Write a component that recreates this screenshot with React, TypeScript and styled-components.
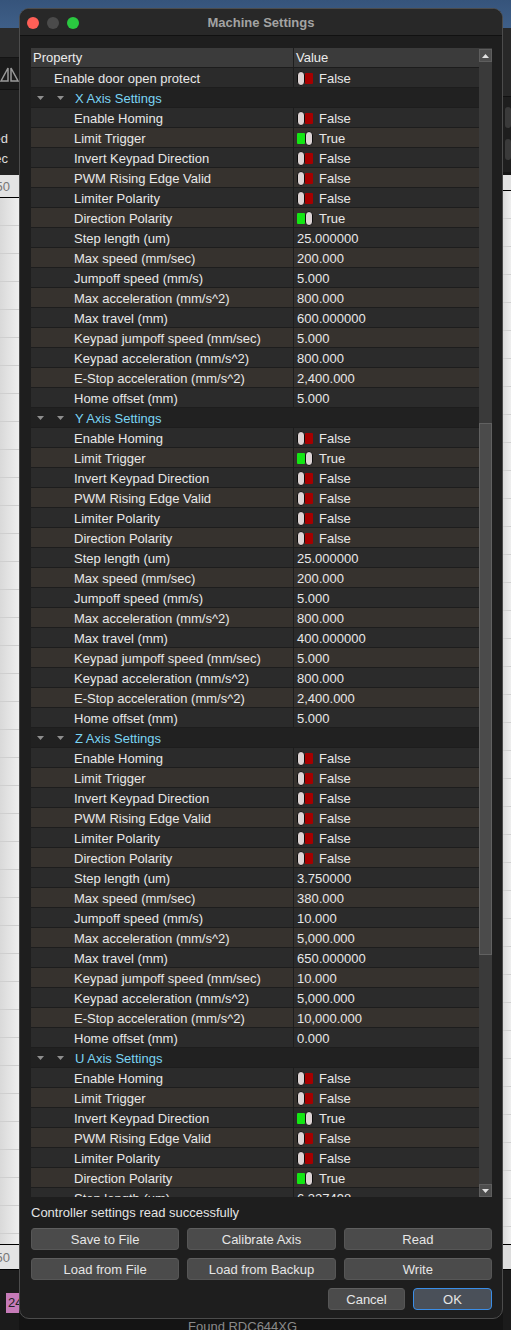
import React from "react";
import styled, { createGlobalStyle } from "styled-components";

const GlobalStyle = createGlobalStyle`
  html, body {
    margin: 0;
    padding: 0;
    background: #121212;
  }
  body {
    font-family: "Liberation Sans", Arial, Helvetica, sans-serif;
    font-size: 13px;
    -webkit-font-smoothing: antialiased;
  }
  * {
    box-sizing: border-box;
  }
`;

// 창 뒤에 보이는 데스크톱 / 앱 배경
const Desktop = styled.div`
  width: 511px;
  height: 1330px;
  overflow: hidden;
  display: flex;
  background: linear-gradient(to bottom, #36547b 0, #3f5f88 28px, #141414 28px);
`;

// 양옆으로 삐져나온 뒤쪽 앱
const Strip = styled.div<{ $w: number }>`
  flex: none;
  width: ${(p) => p.$w}px;
  display: flex;
  flex-direction: column;
  overflow: hidden;
`;

const Band = styled.div<{ $h: number; $bg: string; $line?: string; $color?: string }>`
  flex: none;
  height: ${(p) => p.$h}px;
  background: ${(p) => p.$bg};
  border-bottom: ${(p) => (p.$line ? `1px solid ${p.$line}` : "none")};
  color: ${(p) => p.$color || "#ddd"};
  display: flex;
  align-items: center;
  justify-content: flex-end;
  white-space: nowrap;
  overflow: hidden;
`;

const BandText = styled.span<{ $pad: number }>`
  padding-right: ${(p) => p.$pad}px;
  font-size: 13px;
`;

const BandLines = styled.div`
  flex: none;
  display: flex;
  flex-direction: column;
  justify-content: flex-end;
  height: 85px;
  padding-bottom: 9px;
  gap: 4px;
  background: #222;
`;

const ListArea = styled.div<{ $h: number }>`
  flex: none;
  height: ${(p) => p.$h}px;
  background: repeating-linear-gradient(
      to bottom,
      transparent 0,
      transparent 27px,
      #cfcfcf 27px,
      #cfcfcf 28px
    ),
    linear-gradient(to right, #d9d9d9, #efefef);
  border-bottom: 1px solid #000;
`;

const BoxSlot = styled.div`
  flex: none;
  height: 75px;
  background: #1e1e1e;
  display: flex;
  flex-direction: column;
  gap: 11px;
  padding: 10px 0 0 2px;
`;

const GhostButton = styled.div`
  height: 21px;
  background: #3a3a3a;
  border-radius: 3px;
`;

const PinkTag = styled.div`
  margin: 23px 0 0 6px;
  width: 13px;
  height: 20px;
  background: #c67bb8;
  color: #222;
  font-size: 13px;
  line-height: 20px;
  padding-left: 2px;
  overflow: hidden;
`;

const DarkRest = styled.div`
  flex: 1;
  background: #1b1b1b;
`;

const Center = styled.div`
  flex: none;
  width: 484px;
  display: flex;
  flex-direction: column;
`;

// 다이얼로그 창
const Window = styled.div`
  flex: none;
  height: 1311px;
  margin-top: 8px;
  background: #1e1e1e;
  border: 1px solid #4c4c4c;
  border-radius: 10px;
  display: flex;
  flex-direction: column;
  overflow: hidden;
`;

const TitleBar = styled.div`
  flex: none;
  height: 27px;
  display: grid;
  grid-template-columns: 1fr auto 1fr;
  align-items: center;
  background: #282828;
  border-bottom: 1px solid #111;
`;

const Lights = styled.div`
  display: flex;
  gap: 8px;
  padding-left: 7px;
  padding-top: 1px;
`;

const Light = styled.span<{ $color: string }>`
  width: 12px;
  height: 12px;
  border-radius: 50%;
  background: ${(p) => p.$color};
`;

const Title = styled.div`
  font-weight: bold;
  font-size: 13px;
  color: #a3a3a3;
`;

const Body = styled.div`
  flex: 1;
  display: flex;
  flex-direction: column;
  padding: 12px 10px 0 11px;
`;

// 속성 테이블
const Table = styled.div`
  flex: none;
  height: 1149px;
  display: flex;
  background: #2b2b2b;
`;

const TableMain = styled.div`
  flex: 1;
  min-width: 0;
  display: flex;
  flex-direction: column;
`;

const HeaderRow = styled.div`
  flex: none;
  height: 20px;
  display: grid;
  grid-template-columns: 262px 1fr;
  background: #3b3b3b;
  border-bottom: 1px solid #1c1c1c;
  color: #ececec;
  line-height: 20px;
`;

const HeaderCell = styled.div<{ $divider?: boolean }>`
  padding-left: 2px;
  border-left: ${(p) => (p.$divider ? "1px solid #1e1e1e" : "none")};
`;

const Rows = styled.div`
  flex: 1;
  overflow: hidden;
`;

const toneBg = {
  plain: "#2b2b2b",
  alt: "#36322e",
  section: "#212121",
};

const Row = styled.div<{ $tone: keyof typeof toneBg }>`
  height: 20px;
  display: grid;
  grid-template-columns: 262px 1fr;
  background: ${(p) => toneBg[p.$tone]};
  border-bottom: 1px solid #1d1d1d;
  color: #e8e8e8;
  line-height: 21px;
  white-space: nowrap;
`;

const PropCell = styled.div<{ $indent: number }>`
  padding-left: ${(p) => p.$indent}px;
  overflow: hidden;
`;

const ValueCell = styled.div`
  display: flex;
  align-items: center;
  gap: 6px;
  padding: 1px 0 0 3px;
  border-left: 1px solid #1d1d1d;
  overflow: hidden;
`;

const SectionRow = styled.div`
  height: 20px;
  display: flex;
  align-items: center;
  padding: 1px 0 0 6px;
  background: ${toneBg.section};
  border-bottom: 1px solid #1d1d1d;
  white-space: nowrap;
`;

const Caret = styled.svg`
  flex: none;
  margin-right: 13px;
  &:nth-of-type(2) {
    margin-right: 11px;
  }
`;

const SectionTitle = styled.span`
  color: #7bd4f3;
  line-height: 19px;
`;

// 불린 값 토글
const Toggle = styled.span<{ $on: boolean }>`
  flex: none;
  width: 16px;
  height: 15px;
  display: flex;
  flex-direction: ${(p) => (p.$on ? "row-reverse" : "row")};
  align-items: center;
`;

const Knob = styled.span`
  width: 8px;
  height: 15px;
  border-radius: 4px;
  background: #ddd4d4;
  border: 1.5px solid #0c0c0c;
`;

const Lamp = styled.span<{ $on: boolean }>`
  width: 8px;
  height: 11px;
  border-radius: 1px;
  background: ${(p) => (p.$on ? "#14e614" : "#a60000")};
`;

const ValueText = styled.span`
  line-height: 19px;
`;

const ScrollBar = styled.div`
  flex: none;
  width: 13px;
  display: flex;
  flex-direction: column;
  background: #3a3a3a;
`;

const ScrollButton = styled.div`
  flex: none;
  height: 13px;
  background: #4e4e4e;
  border: 1px solid #5e5e5e;
  display: flex;
  align-items: center;
  justify-content: center;
  margin-top: 1px;
`;

const Track = styled.div`
  flex: 1;
  display: flex;
  flex-direction: column;
`;

const Thumb = styled.div<{ $offset: number; $size: number }>`
  margin-top: ${(p) => p.$offset}px;
  height: ${(p) => p.$size}px;
  background: #4b4b4b;
  border: 1px solid #616161;
`;

const Status = styled.div`
  margin-top: 8px;
  height: 16px;
  line-height: 16px;
  color: #e4e4e4;
`;

const ButtonGrid = styled.div`
  margin-top: 7px;
  display: grid;
  grid-template-columns: repeat(3, 1fr);
  column-gap: 8px;
  row-gap: 8px;
`;

const PushButton = styled.button<{ $primary?: boolean; $w?: number }>`
  height: 22px;
  width: ${(p) => (p.$w ? `${p.$w}px` : "auto")};
  padding: 1px 0 0;
  font-family: inherit;
  font-size: 13px;
  line-height: 16px;
  color: #e6e6e6;
  background: ${(p) => (p.$primary ? "#4a5059" : "#4b4b4b")};
  border: ${(p) => (p.$primary ? "1.5px solid #3a8ee8" : "1px solid #565656")};
  border-top-color: ${(p) => (p.$primary ? "#3a8ee8" : "#5f5f5f")};
  border-radius: 4px;
`;

const DialogButtons = styled.div`
  margin-top: 8px;
  display: flex;
  justify-content: flex-end;
  gap: 8px;
`;

const Footer = styled.div`
  padding-left: 169px;
  line-height: 15px;
  color: #8a8a8a;
  white-space: nowrap;
`;

type Value = boolean | string;

interface Setting {
  label: string;
  value: Value;
}

interface AxisGroup {
  title: string;
  settings: Setting[];
}

const numericLabels = [
  "Step length (um)",
  "Max speed (mm/sec)",
  "Jumpoff speed (mm/s)",
  "Max acceleration (mm/s^2)",
  "Max travel (mm)",
  "Keypad jumpoff speed (mm/sec)",
  "Keypad acceleration (mm/s^2)",
  "E-Stop acceleration (mm/s^2)",
  "Home offset (mm)",
];

const flagLabels = [
  "Enable Homing",
  "Limit Trigger",
  "Invert Keypad Direction",
  "PWM Rising Edge Valid",
  "Limiter Polarity",
  "Direction Polarity",
];

function axis(title: string, flags: boolean[], nums: string[]): AxisGroup {
  return {
    title,
    settings: [
      ...flagLabels.map((label, i) => ({ label, value: flags[i] })),
      ...numericLabels.map((label, i) => ({ label, value: nums[i] })),
    ],
  };
}

const axes: AxisGroup[] = [
  axis(
    "X Axis Settings",
    [false, true, false, false, false, true],
    ["25.000000", "200.000", "5.000", "800.000", "600.000000", "5.000", "800.000", "2,400.000", "5.000"]
  ),
  axis(
    "Y Axis Settings",
    [false, true, false, false, false, false],
    ["25.000000", "200.000", "5.000", "800.000", "400.000000", "5.000", "800.000", "2,400.000", "5.000"]
  ),
  axis(
    "Z Axis Settings",
    [false, false, false, false, false, false],
    ["3.750000", "380.000", "10.000", "5,000.000", "650.000000", "10.000", "5,000.000", "10,000.000", "0.000"]
  ),
  axis(
    "U Axis Settings",
    [false, false, true, false, false, true],
    ["6.327498", "100.000", "5.000", "500.000", "0.000000", "5.000", "500.000", "1,000.000", "0.000"]
  ),
];

type FlatRow =
  | { kind: "section"; title: string }
  | { kind: "item"; label: string; value: Value; indent: number };

// 스크롤 영역에 보이는 행까지만
const VISIBLE_ROWS = 57;

const flatRows: FlatRow[] = [
  { kind: "item" as const, label: "Enable door open protect", value: false, indent: 23 },
  ...axes.flatMap((g): FlatRow[] => [
    { kind: "section", title: g.title },
    ...g.settings.map((s): FlatRow => ({ kind: "item", label: s.label, value: s.value, indent: 43 })),
  ]),
].slice(0, VISIBLE_ROWS);

function CaretIcon({ color }: { color: string }) {
  return (
    <Caret width="7" height="4" viewBox="0 0 7 4">
      <path d="M0 0 L7 0 L3.5 4 Z" fill={color} />
    </Caret>
  );
}

function ArrowIcon({ up }: { up: boolean }) {
  return (
    <svg width="7" height="4" viewBox="0 0 7 4">
      <path d={up ? "M0 4 L7 4 L3.5 0 Z" : "M0 0 L7 0 L3.5 4 Z"} fill="#e2e2e2" />
    </svg>
  );
}

function BoolValue({ on }: { on: boolean }) {
  return (
    <>
      <Toggle $on={on}>
        <Knob />
        <Lamp $on={on} />
      </Toggle>
      <ValueText>{on ? "True" : "False"}</ValueText>
    </>
  );
}

function MachineSettings() {
  return (
    <Window>
      <TitleBar>
        <Lights>
          <Light $color="#fe5f57" />
          <Light $color="#4b4b4b" />
          <Light $color="#2ac840" />
        </Lights>
        <Title>Machine Settings</Title>
        <div />
      </TitleBar>
      <Body>
        <Table>
          <TableMain>
            <HeaderRow>
              <HeaderCell>Property</HeaderCell>
              <HeaderCell $divider>Value</HeaderCell>
            </HeaderRow>
            <Rows>
              {flatRows.map((r, i) =>
                r.kind === "section" ? (
                  <SectionRow key={i}>
                    <CaretIcon color="#8e8e8e" />
                    <CaretIcon color="#8e8e8e" />
                    <SectionTitle>{r.title}</SectionTitle>
                  </SectionRow>
                ) : (
                  <Row key={i} $tone={i % 2 === 0 ? "plain" : "alt"}>
                    <PropCell $indent={r.indent}>{r.label}</PropCell>
                    <ValueCell>
                      {typeof r.value === "boolean" ? (
                        <BoolValue on={r.value} />
                      ) : (
                        <ValueText>{r.value}</ValueText>
                      )}
                    </ValueCell>
                  </Row>
                )
              )}
            </Rows>
          </TableMain>
          <ScrollBar>
            <ScrollButton>
              <ArrowIcon up />
            </ScrollButton>
            <Track>
              <Thumb $offset={361} $size={532} />
            </Track>
            <ScrollButton>
              <ArrowIcon up={false} />
            </ScrollButton>
          </ScrollBar>
        </Table>
        <Status>Controller settings read successfully</Status>
        <ButtonGrid>
          <PushButton>Save to File</PushButton>
          <PushButton>Calibrate Axis</PushButton>
          <PushButton>Read</PushButton>
          <PushButton>Load from File</PushButton>
          <PushButton>Load from Backup</PushButton>
          <PushButton>Write</PushButton>
        </ButtonGrid>
        <DialogButtons>
          <PushButton $w={77}>Cancel</PushButton>
          <PushButton $w={79} $primary>
            OK
          </PushButton>
        </DialogButtons>
      </Body>
    </Window>
  );
}

export default function App() {
  return (
    <>
      <GlobalStyle />
      <Desktop>
        <Strip $w={19}>
          <Band $h={28} $bg="transparent" />
          <Band $h={30} $bg="#2b2b2b" $line="#141414" />
          <Band $h={32} $bg="#1b1b1b" $line="#111">
            <svg width="19" height="18" viewBox="0 0 19 18" style={{ flex: "none" }}>
              <path d="M1 16 L8 3 L8 16 Z M11 3 L18 16 L11 16 Z" fill="none" stroke="#9a9a9a" strokeWidth="1.5" />
            </svg>
          </Band>
          <BandLines>
            <Band $h={16} $bg="transparent">
              <BandText $pad={11}>Speed</BandText>
            </Band>
            <Band $h={16} $bg="transparent">
              <BandText $pad={11}>Spec</BandText>
            </Band>
          </BandLines>
          <Band $h={23} $bg="#e3e3e3" $line="#000" $color="#777">
            <BandText $pad={9}>50</BandText>
          </Band>
          <ListArea $h={1047} />
          <Band $h={25} $bg="#e3e3e3" $line="#000" $color="#777">
            <BandText $pad={9}>50</BandText>
          </Band>
          <DarkRest>
            <PinkTag>24</PinkTag>
          </DarkRest>
        </Strip>
        <Center>
          <MachineSettings />
          <Footer>Found RDC644XG</Footer>
        </Center>
        <Strip $w={8}>
          <Band $h={28} $bg="transparent" />
          <Band $h={69} $bg="#282828" $line="#111" />
          <BoxSlot>
            <GhostButton />
            <GhostButton />
          </BoxSlot>
          <Band $h={3} $bg="#151515" />
          <Band $h={16} $bg="#e2e2e2" $line="#000" />
          <ListArea $h={1054} />
          <Band $h={25} $bg="#dcdcdc" $line="#000" />
          <DarkRest />
        </Strip>
      </Desktop>
    </>
  );
}
